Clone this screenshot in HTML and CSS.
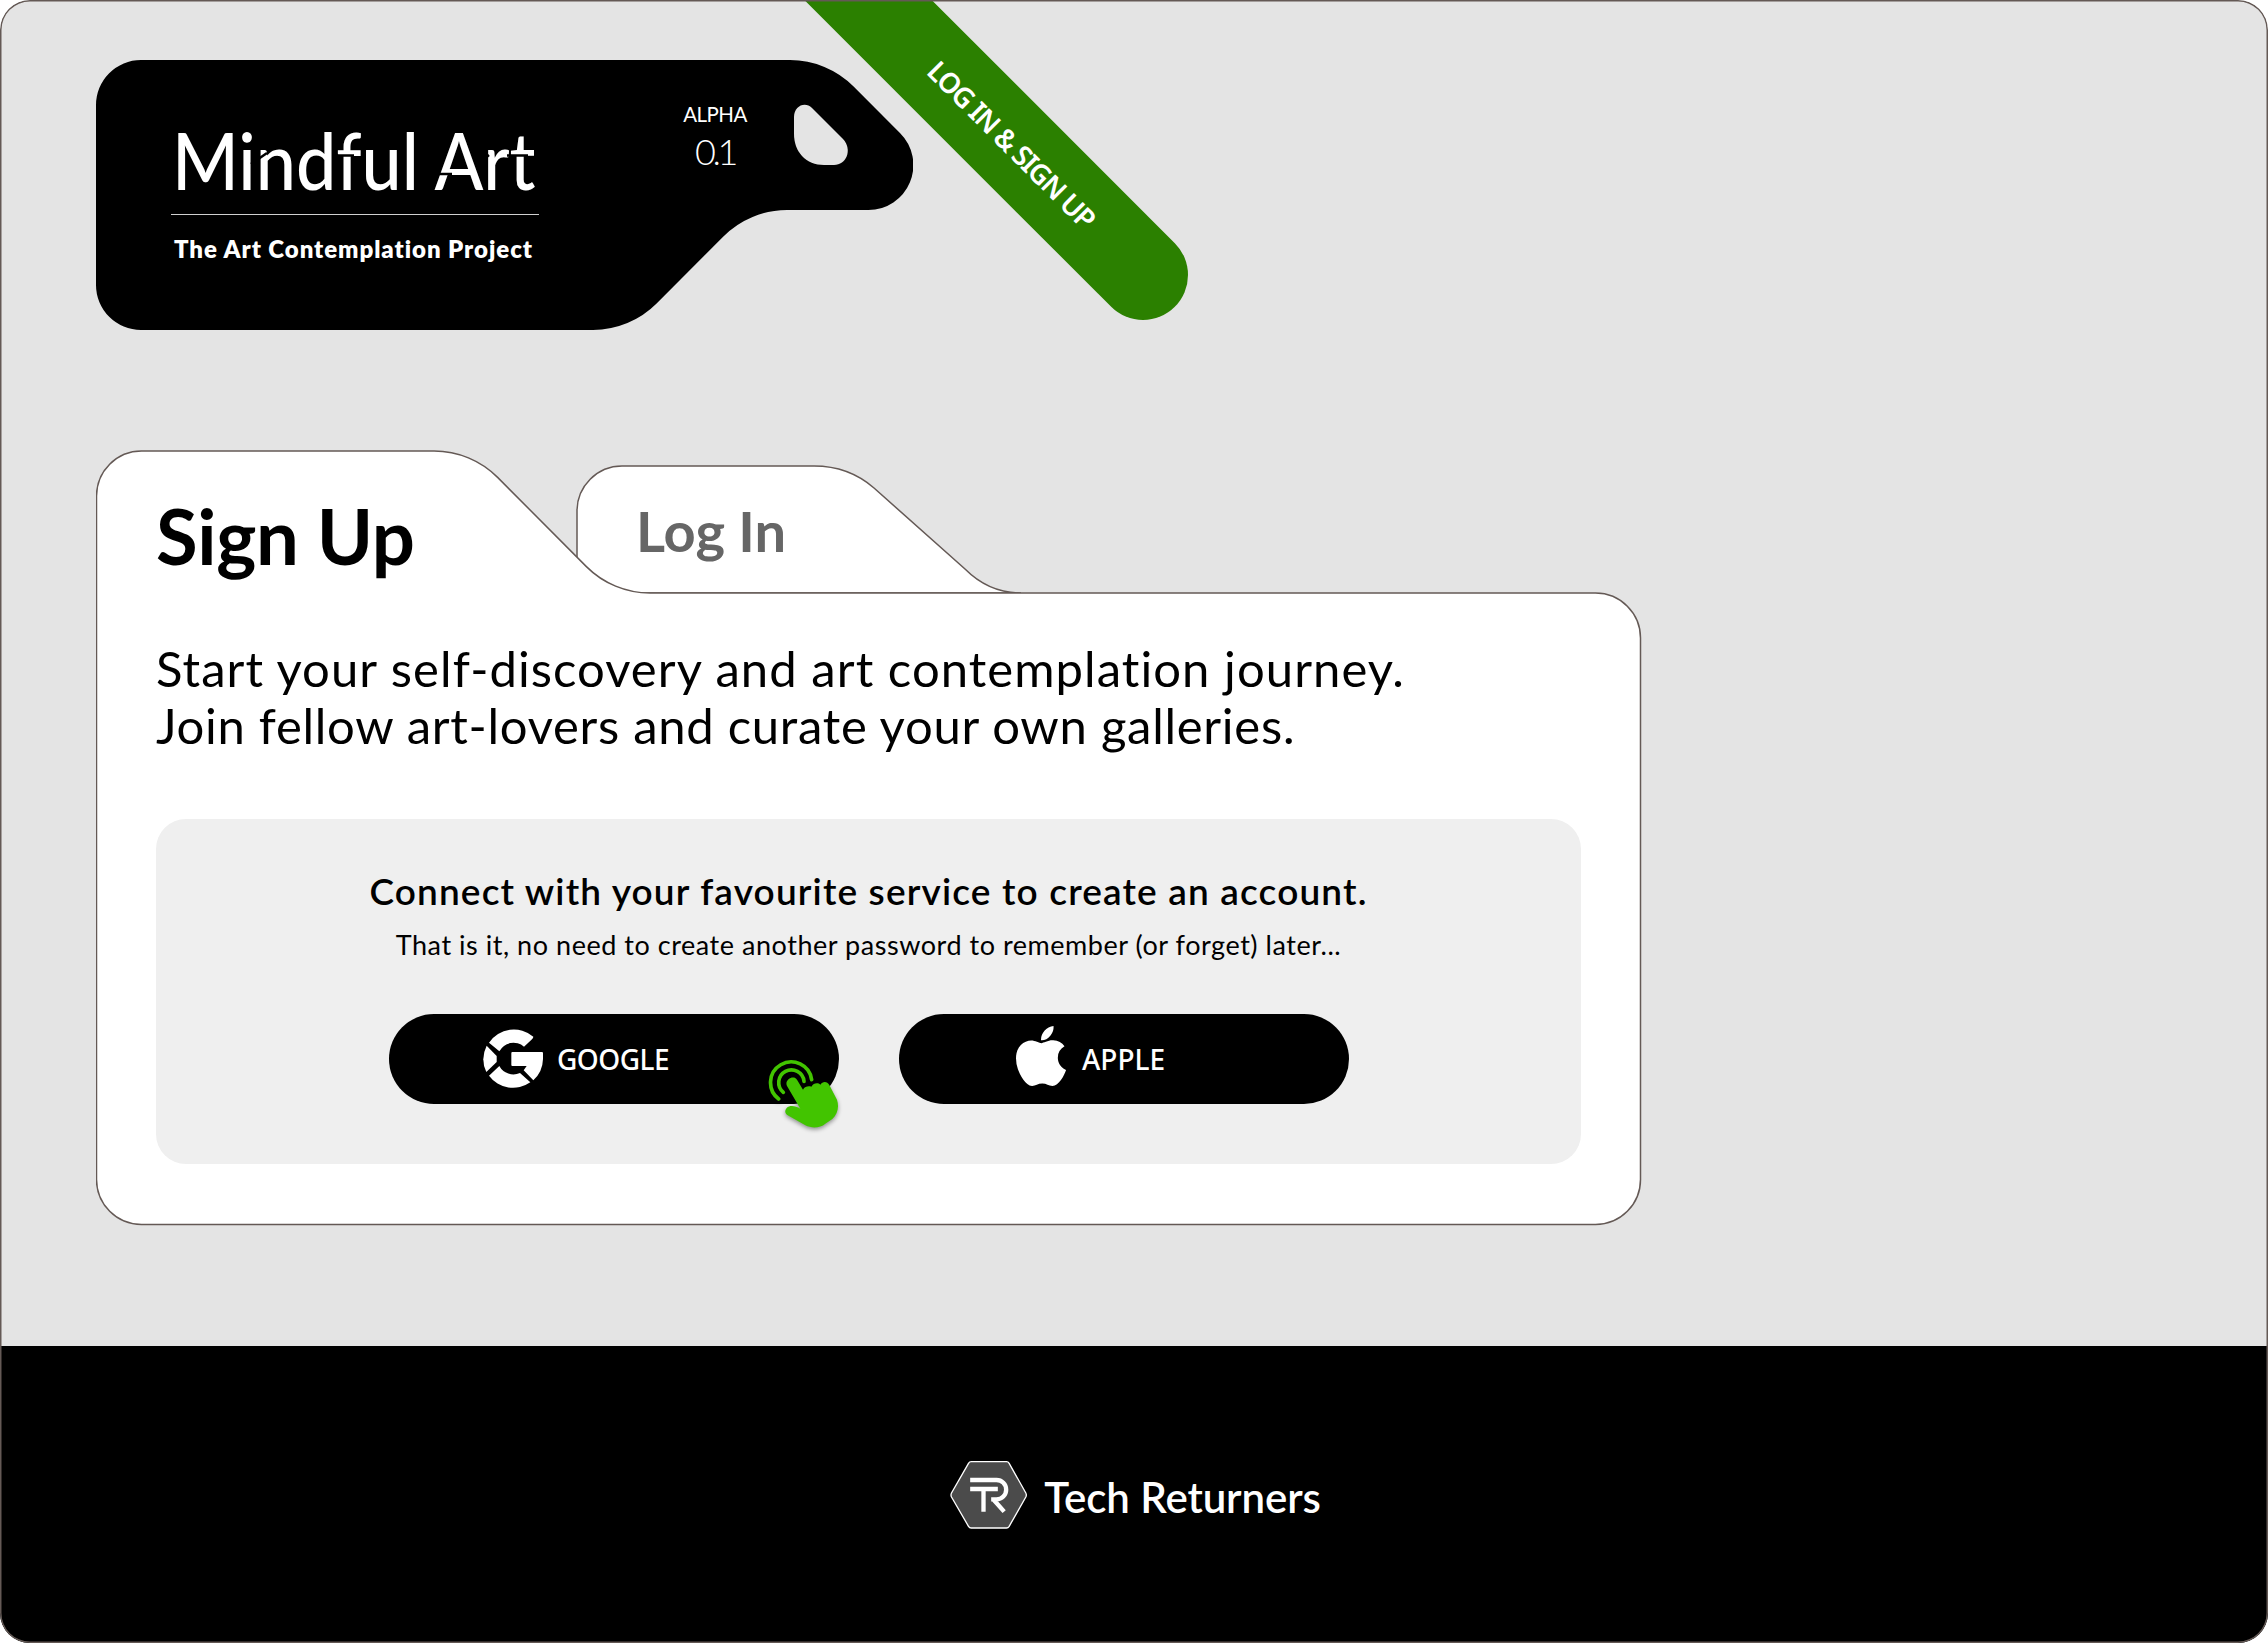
FILE: index.html
```html
<!DOCTYPE html>
<html lang="en">
<head>
<meta charset="utf-8">
<title>Mindful Art – Sign Up</title>
<link rel="stylesheet" href="styles.css">
</head>
<body>
<div class="page">
  <header class="header">
    <div class="brand">
      <svg class="shape" viewBox="0 0 817 270" width="817" height="270">
        <path d="M45 0H694A90 90 0 0 1 757.6 26.400L804.200 73.200A45 45 0 0 1 772.400 150H691A90 90 0 0 0 627.400 176.400L560.600 243.600A90 90 0 0 1 497 270H45A45 45 0 0 1 0 225V45A45 45 0 0 1 45 0Z"/>
        <path class="hole" d="M698 57V74C698 92 710 105 728 105H738C750 105 757 90 747 79L716 48C709 41 698 46 698 57Z"/>
      </svg>
      <div class="brand-text">
        <div class="brand-name">Mindful Art</div>
        <div class="brand-tag">The Art Contemplation Project</div>
      </div>
      <div class="version"><span class="v-label">ALPHA</span><span class="v-num">0.1</span></div>
      <!-- stencil breaks across the wordmark -->
      <svg class="stencil" viewBox="0 0 817 270" width="817" height="270">
        <path d="M155 104L171 93M197 100L206 92M238 95.500H258M333 114H356M382 104L393 95M411 95.500H432"/>
      </svg>
    </div>
    <div class="ribbon">LOG IN &amp; SIGN UP</div>
  </header>

  <main class="card">
    <svg class="shape" viewBox="0 0 1546 777" width="1546" height="777">
      <path class="outline" d="M481 143V61A45 45 0 0 1 526 16H718C741 16 762 24 778 38L869 119C884 134 903 143 925 143Z"/>
      <path class="outline" d="M45.500 1H338A90 90 0 0 1 401.600 27.400L490.400 116.600A90 90 0 0 0 554 143H1499.500A45 45 0 0 1 1544.500 188V729.500A45 45 0 0 1 1499.500 774.500H45.500A45 45 0 0 1 .5 729.500V46A45 45 0 0 1 45.500 1Z"/>
    </svg>
    <nav class="tabs">
      <h1 class="tab-active">Sign Up</h1>
      <h2 class="tab">Log In</h2>
    </nav>
    <p class="intro"><span class="intro-lead">Start your self-discovery and art contemplation journey.</span><span class="intro-more">Join fellow art-lovers and curate your own galleries.</span></p>
    <section class="panel">
      <h3 class="panel-title">Connect with your favourite service to create an account.</h3>
      <p class="panel-sub">That is it, no need to create another password to remember (or forget) later...</p>
      <div class="buttons">
        <button class="btn google">
          <svg class="icon" width="60" height="60" viewBox="0 0 180 180">
            <path d="M151 23A90 90 0 0 0 18 41L49 67A48 48 0 0 1 123 53L147 31Q151 27 151 23Z"/>
            <path d="M11 50A90 90 0 0 0 10 129L41 99V81Z"/>
            <path d="M18 140A90 90 0 0 0 142 160L111 132A48 48 0 0 1 49 111Z"/>
            <path d="M85 72Q85 69 88 69H177Q180 69 180 73V90A90 90 0 0 1 151 154L122 124L131 111H88Q85 111 85 108Z"/>
          </svg>
          <span>GOOGLE</span>
          <svg class="pointer" width="75" height="75" viewBox="50 55 225 225">
            <path class="ring" d="M85 178A62 62 0 1 1 184 120"/>
            <path class="ring" d="M99 158A38 38 0 1 1 161 125"/>
            <path d="M110 139C101 121 129 104 140 120L158 150C163 140 175 138 183 141C189 130 203 128 210 135C217 124 231 125 237 136L260 180C267 202 262 223 246 238L225 252C210 265 185 267 165 257L112 227C104 222 102 214 109 205C118 196 135 198 150 207Z"/>
          </svg>
        </button>
        <button class="btn apple">
          <svg class="icon" width="50" height="60" viewBox="4 32 376 448" preserveAspectRatio="none">
            <path d="M318.700 268.700c-.2-36.700 16.400-64.400 50-84.800-18.800-26.900-47.200-41.700-84.700-44.600-35.500-2.800-74.300 20.700-88.500 20.700-15 0-49.400-19.700-76.400-19.700C63.300 141.200 4 184.800 4 273.500q0 39.300 14.400 81.200c12.800 36.700 59 126.700 107.200 125.200 25.200-.6 43-17.900 75.800-17.900 31.800 0 48.300 17.900 76.400 17.900 48.600-.7 90.400-82.500 102.600-119.300-65.200-30.700-61.700-90-61.700-91.900zm-56.600-164.200c27.300-32.400 24.800-61.900 24-72.500-24.100 1.400-52 16.400-67.900 34.900-17.500 19.800-27.800 44.300-25.600 71.900 26.100 2 49.900-11.400 69.500-34.300z"/>
          </svg>
          <span>APPLE</span>
        </button>
      </div>
    </section>
  </main>

  <footer class="footer">
    <svg class="company-logo" width="79" height="70" viewBox="60 60 236 210">
      <path class="hex" d="M126 65H232Q237 65 240 70L290 159Q293 165 290 171L240 259Q237 264 232 264H126Q121 264 118 259L67 171Q64 165 67 159L118 70Q121 65 126 65Z"/>
      <path class="mono" d="M123 120H202A29 29 0 0 1 202 178H186M123 147H206M163 147V215M194 180L225 215"/>
    </svg>
    <span class="company">Tech Returners</span>
  </footer>
</div>
</body>
</html>
```
FILE: styles.css
```css
* {
  box-sizing: border-box;
  margin: 0;
  padding: 0;
}

body {
  background: #fff;
  font-family: Lato, sans-serif;
  color: #000;
}

.page {
  position: relative;
  display: flex;
  flex-direction: column;
  width: 2268px;
  height: 1643px;
  background: #e4e4e4;
  border-radius: 30px;
  overflow: hidden;
}

.page::after {
  content: "";
  position: absolute;
  inset: 0;
  border-radius: 30px;
  box-shadow: inset 0 0 0 1.5px #645955;
  pointer-events: none;
}

.header {
  height: 450px;
  padding: 60px 0 0 96px;
}

.brand,
.card {
  position: relative;
  z-index: 0;
}

.brand {
  display: flex;
  width: 817px;
  height: 270px;
  color: #fff;
}

.shape {
  position: absolute;
  left: 0;
  top: 0;
  z-index: -1;
}

.stencil {
  position: absolute;
  left: 0;
  top: 0;
  fill: none;
  stroke: #000;
  stroke-width: 2.5;
}

.hole {
  fill: #e4e4e4;
}

.brand-text {
  width: 368px;
  margin: 59px 0 0 75px;
}

.brand-name {
  padding-left: 1px;
  font-size: 80px;
  font-weight: 500;
  line-height: 80px;
  white-space: nowrap;
  transform: scaleX(.897);
  transform-origin: 0 0;
}

.brand-tag {
  margin-top: 15px;
  padding: 19px 0 0 3px;
  border-top: 1px solid #d0d0d0;
  font-size: 24px;
  font-weight: 800;
  line-height: 30px;
  letter-spacing: .95px;
  white-space: nowrap;
}

.version {
  display: flex;
  flex-direction: column;
  align-items: center;
  gap: 4px;
  width: 100px;
  margin: 41px 0 0 126px;
}

.v-label {
  font-size: 20.5px;
  line-height: 26px;
  letter-spacing: -.5px;
}

.v-num {
  font-size: 36px;
  font-weight: 300;
  line-height: 40px;
  letter-spacing: -3.4px;
}

.ribbon {
  position: absolute;
  left: 687.5px;
  top: 230px;
  width: 500px;
  height: 90px;
  padding-right: 119px;
  border-radius: 0 45px 45px 0;
  background: #2b8000;
  color: #fff;
  font: 600 28px/90px "Noto Sans", sans-serif;
  letter-spacing: -1.45px;
  text-align: right;
  transform: rotate(45deg);
  transform-origin: 455px 45px;
}

.card {
  width: 1546px;
  height: 777px;
  margin-left: 96px;
  padding: 46px 61px 0 60px;
}

.outline {
  fill: #fff;
  stroke: #645955;
  stroke-width: 1.5;
}

.tabs {
  display: flex;
  height: 80px;
}

.tab-active {
  width: 480px;
  font-size: 76px;
  line-height: 80px;
  letter-spacing: -.3px;
}

.tab {
  margin-top: -5px;
  font-size: 56px;
  line-height: 80px;
  letter-spacing: -.1px;
  color: #666;
}

.intro {
  display: flex;
  flex-direction: column;
  margin-top: 64px;
  font-size: 49px;
  line-height: 57px;
  white-space: nowrap;
}

.intro-lead {
  letter-spacing: 1.06px;
}

.intro-more {
  letter-spacing: .72px;
}

.panel {
  height: 345px;
  margin-top: 65px;
  padding-top: 50px;
  border-radius: 30px;
  background: #efefef;
  text-align: center;
}

.panel-title {
  font-size: 37px;
  font-weight: 600;
  line-height: 44px;
  letter-spacing: 1.15px;
}

.panel-sub {
  margin-top: 15px;
  font-size: 27px;
  font-weight: 400;
  line-height: 34px;
  letter-spacing: .54px;
}

.buttons {
  display: flex;
  justify-content: center;
  gap: 60px;
  margin-top: 52px;
}

.btn {
  position: relative;
  display: flex;
  align-items: center;
  width: 450px;
  height: 90px;
  border: 0;
  border-radius: 45px;
  background: #000;
  color: #fff;
  font: 500 28px "Noto Sans", sans-serif;
}

.btn span {
  margin-top: -1px;
}

.google {
  gap: 14px;
  padding-left: 94.5px;
  letter-spacing: -.5px;
}

.apple {
  gap: 16px;
  padding-left: 117.5px;
}

.apple .icon {
  margin-top: -6px;
}

.icon {
  fill: #fff;
}

.pointer {
  position: absolute;
  left: 378px;
  top: 44px;
  fill: #42c400;
  filter: drop-shadow(0 2px 2px rgba(0, 0, 0, .4));
}

.ring {
  fill: none;
  stroke: #42c400;
  stroke-width: 11;
  stroke-linecap: round;
}

.footer {
  display: flex;
  align-items: center;
  justify-content: center;
  gap: 16px;
  height: 297.5px;
  margin-top: auto;
  padding: 2px 0 0 2px;
  background: #000;
  color: #fff;
}

.company {
  font-size: 42px;
  font-weight: 600;
  letter-spacing: -.1px;
  padding-top: 3px;
}

.company-logo {
  fill: none;
  stroke: #fff;
}

.hex {
  fill: #4b4b4b;
  stroke-width: 4;
}

.mono {
  stroke-width: 13;
}
```
